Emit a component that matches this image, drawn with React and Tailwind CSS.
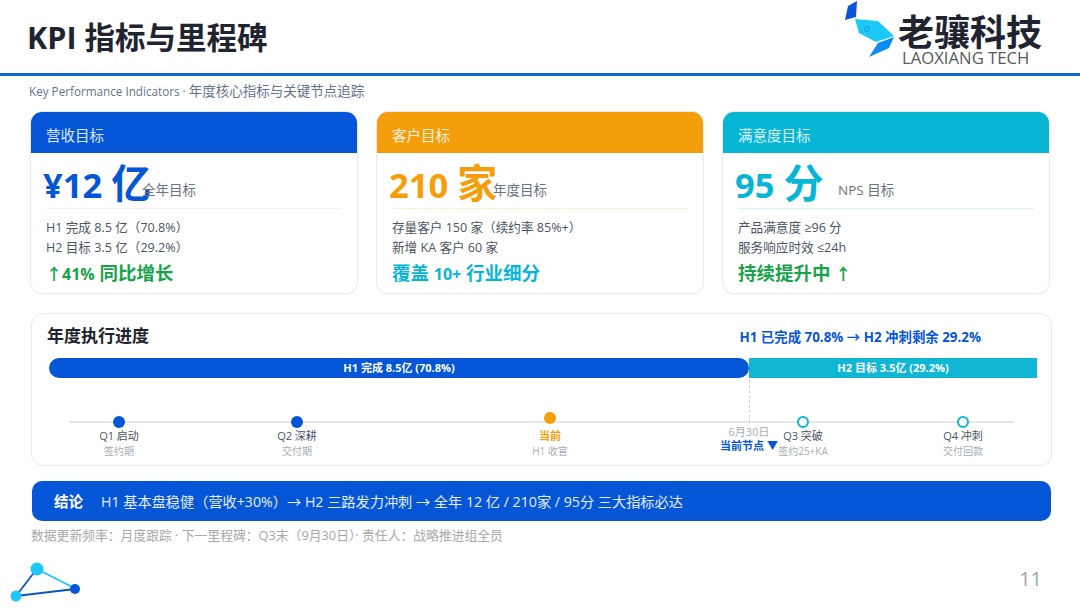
import React from 'react';

const Small = ({ children }) => <span className="text-[16px]">{children}</span>;

const kpis = [
    {
        head: '营收目标',
        headBg: 'bg-[#0556d6]',
        color: 'text-[#0556d6]',
        rule: 'border-[#eef1f5]',
        num: '¥12',
        unit: '亿',
        valueW: 'w-[99px]',
        label: '全年目标',
        lines: ['H1 完成 8.5 亿（70.8%）', 'H2 目标 3.5 亿（29.2%）'],
        note: <><Small>↑41%</Small> 同比增长</>,
        noteColor: 'text-[#16a34a]',
    },
    {
        head: '客户目标',
        headBg: 'bg-[#f59e0b]',
        color: 'text-[#f59e0b]',
        rule: 'border-[#fdf3d0]',
        num: '210',
        unit: '家',
        valueW: 'w-[104px]',
        label: '年度目标',
        lines: ['存量客户 150 家（续约率 85%+）', '新增 KA 客户 60 家'],
        note: <>覆盖 <Small>10+</Small> 行业细分</>,
        noteColor: 'text-[#06b6d4]',
    },
    {
        head: '满意度目标',
        headBg: 'bg-[#06b6d4]',
        color: 'text-[#06b6d4]',
        rule: 'border-[#d5f5fa]',
        num: '95',
        unit: '分',
        valueW: 'w-[103px]',
        label: 'NPS 目标',
        lines: ['产品满意度 ≥96 分', '服务响应时效 ≤24h'],
        note: <>持续提升中 <Small>↑</Small></>,
        noteColor: 'text-[#16a34a]',
    },
];

const nodes = [
    { name: 'Q1 启动', sub: '签约期', dot: 'bg-[#0556d6]', offset: 'ml-[27px]', nameClass: 'text-[#4b5563]' },
    { name: 'Q2 深耕', sub: '交付期', dot: 'bg-[#0556d6]', offset: 'ml-[58px]', nameClass: 'text-[#4b5563]' },
    { name: '当前', sub: 'H1 收官', dot: 'bg-[#f59e0b] -translate-y-1', offset: 'ml-[133px]', nameClass: 'text-[#f59e0b] font-bold' },
    { name: 'Q3 突破', sub: '签约25+KA', dot: 'bg-white border-[2.5px] border-[#06b6d4]', offset: 'ml-[133px]', nameClass: 'text-[#4b5563]' },
    { name: 'Q4 冲刺', sub: '交付回款', dot: 'bg-white border-[2.5px] border-[#06b6d4]', offset: 'ml-[40px]', nameClass: 'text-[#4b5563]' },
];

const BrandMark = () => (
    <svg className="w-[54px] h-[58px] shrink-0" viewBox="842 0 54 58">
        <polygon points="856,1 847,6 844,20 855,17" fill="#0b55d8" />
        <polygon points="854,19 877,21 893,36 875,42 858,33" fill="#1cc8f8" />
        <circle cx="866" cy="29" r="2.4" fill="none" stroke="#0b8fc4" strokeWidth="0.8" />
        <polygon points="893,37 888,48 868,57 877,43" fill="#0d8bf5" />
    </svg>
);

const CornerMark = () => (
    <svg className="w-[84px] h-[46px] shrink-0" viewBox="0 556 84 46">
        <line x1="37" y1="569" x2="76" y2="589" stroke="#1cc8f8" strokeWidth="1.8" />
        <line x1="36" y1="570" x2="16" y2="596" stroke="#0b55c8" strokeWidth="1.8" />
        <line x1="16" y1="596" x2="75" y2="589" stroke="#0b55c8" strokeWidth="1.8" />
        <circle cx="37" cy="569" r="6.5" fill="#1cc8f8" />
        <circle cx="16" cy="596" r="5.5" fill="#1cc8f8" />
        <circle cx="75" cy="589" r="5" fill="#0556d6" />
    </svg>
);

const KpiCard = ({ kpi }) => (
    <div className="h-[183px] rounded-xl border border-[#e8eaee] bg-white overflow-hidden shadow-[0_1px_2px_rgba(0,0,0,0.04)]">
        <div className={`${kpi.headBg} h-[42px] -mx-px flex items-center px-4 pt-[8px] text-[14.5px] text-white/85 mt-[-1px]`}>
            {kpi.head}
        </div>
        <div className="px-[15px]">
            <div className={`h-[56px] flex items-end border-b ${kpi.rule} pb-[5px]`}>
                <div className={`${kpi.valueW} -ml-[3px] shrink-0 whitespace-nowrap font-bold leading-none ${kpi.color}`}>
                    <span className="text-[34.5px]">{kpi.num} </span>
                    <span className="text-[40px]">{kpi.unit}</span>
                </div>
                <span className="mb-[3px] text-[13.5px] leading-5 text-[#6b7280] whitespace-nowrap relative">{kpi.label}</span>
            </div>
            <div className="mt-[9px] text-[12.6px] leading-5 text-[#4b5563]">
                {kpi.lines.map((line) => (
                    <div key={line}>{line}</div>
                ))}
            </div>
            <div className={`mt-[3px] text-[18.5px] leading-6 font-bold ${kpi.noteColor}`}>{kpi.note}</div>
        </div>
    </div>
);

export default function App() {
    return (
        <div className="relative w-[1080px] h-[608px] overflow-hidden bg-white font-['Open_Sans','Noto_Sans_CJK_SC',sans-serif]">
            {/* Header */}
            <div className="h-[76px] border-b-[3px] border-[#1565d0] flex items-start justify-between pl-[27px] pr-[38px]">
                <h1 className="mt-[17px] text-[30.5px] leading-10 font-bold text-[#1f2430]">KPI 指标与里程碑</h1>
                <div className="flex items-start">
                    <BrandMark />
                    <div className="ml-[1px] flex flex-col">
                        <span className="mt-[14px] text-[36px] leading-[38px] font-bold text-[#1f2430] whitespace-nowrap">老骧科技</span>
                        <span className="ml-[4px] -mt-[2px] text-[16.7px] leading-[16px] text-[#595959] whitespace-nowrap">LAOXIANG TECH</span>
                    </div>
                </div>
            </div>

            <p className="pl-[29px] mt-[6px] h-[18px] text-[11.7px] leading-[18px] text-[#64748b]">
                Key Performance Indicators · <span className="text-[13.5px]">年度核心指标与关键节点追踪</span>
            </p>

            {/* KPI cards */}
            <div className="mt-[11px] ml-[30px] w-[1020px] grid grid-cols-3 gap-[18px]">
                {kpis.map((kpi) => (
                    <KpiCard key={kpi.head} kpi={kpi} />
                ))}
            </div>

            {/* Progress */}
            <div className="relative mt-[19px] ml-[31px] w-[1021px] h-[153px] rounded-xl border border-[#e8eaee] bg-white">
                <div className="flex items-center justify-between pl-[15px] pr-[70px] h-[44px]">
                    <h2 className="text-[17px] leading-6 font-bold text-[#1f2430]">年度执行进度</h2>
                    <span className="mt-[3px] text-[13.4px] font-bold text-[#0556d6] whitespace-nowrap">H1 已完成 70.8% → H2 冲刺剩余 29.2%</span>
                </div>
                <div className="ml-[17px] w-[988px] h-[20px] flex text-[11px] font-bold text-white">
                    <div className="w-[700px] rounded-full bg-[#0556d6] flex items-center justify-center">H1 完成 8.5亿 (70.8%)</div>
                    <div className="flex-1 bg-[#0fb7d4] flex items-center justify-center">H2 目标 3.5亿 (29.2%)</div>
                </div>
                <div className="relative mt-[38px] flex">
                    <div className="absolute left-[37px] w-[945px] top-[5px] h-[2px] bg-[#e5e7eb]" />
                    {nodes.map((node) => (
                        <div key={node.name} className={`relative w-[120px] shrink-0 flex flex-col items-center ${node.offset}`}>
                            <div className={`w-[12px] h-[12px] rounded-full ${node.dot}`} />
                            <span className={`text-[11px] leading-[16px] ${node.nameClass}`}>{node.name}</span>
                            <span className="mt-[1px] text-[10px] leading-[13px] text-[#a8adb5]">{node.sub}</span>
                        </div>
                    ))}
                </div>
                {/* 6/30 marker */}
                <div className="absolute left-[657px] top-[66px] w-[120px] flex flex-col items-center">
                    <div className="h-[43px] border-l border-dashed border-[#cbd5e1]" />
                    <span className="mt-[2px] text-[11px] leading-[14px] text-[#a8adb5]">6月30日</span>
                    <span className="text-[11px] leading-[14px] font-bold text-[#0556d6] whitespace-nowrap">当前节点 ▼</span>
                </div>
            </div>

            {/* Conclusion */}
            <div className="mt-[15px] ml-[32px] w-[1019px] h-[40px] rounded-[10px] bg-[#0556d6] flex items-center pl-[22px] pt-[1px] text-white">
                <span className="text-[14.5px] font-bold">结论</span>
                <span className="ml-[18px] text-[14.2px] text-white/90 whitespace-nowrap">H1 基本盘稳健（营收+30%）→ H2 三路发力冲刺 → 全年 12 亿 / 210家 / 95分 三大指标必达</span>
            </div>

            <p className="mt-[5px] pl-[31px] text-[12.8px] leading-[18px] text-[#a8a8a8]">数据更新频率：月度跟踪 · 下一里程碑：Q3末（9月30日）· 责任人：战略推进组全员</p>

            {/* Footer */}
            <div className="mt-[12px] flex items-center justify-between pr-[38px]">
                <CornerMark />
                <span className="text-[20px] text-[#9ca3af]">11</span>
            </div>
        </div>
    );
}
